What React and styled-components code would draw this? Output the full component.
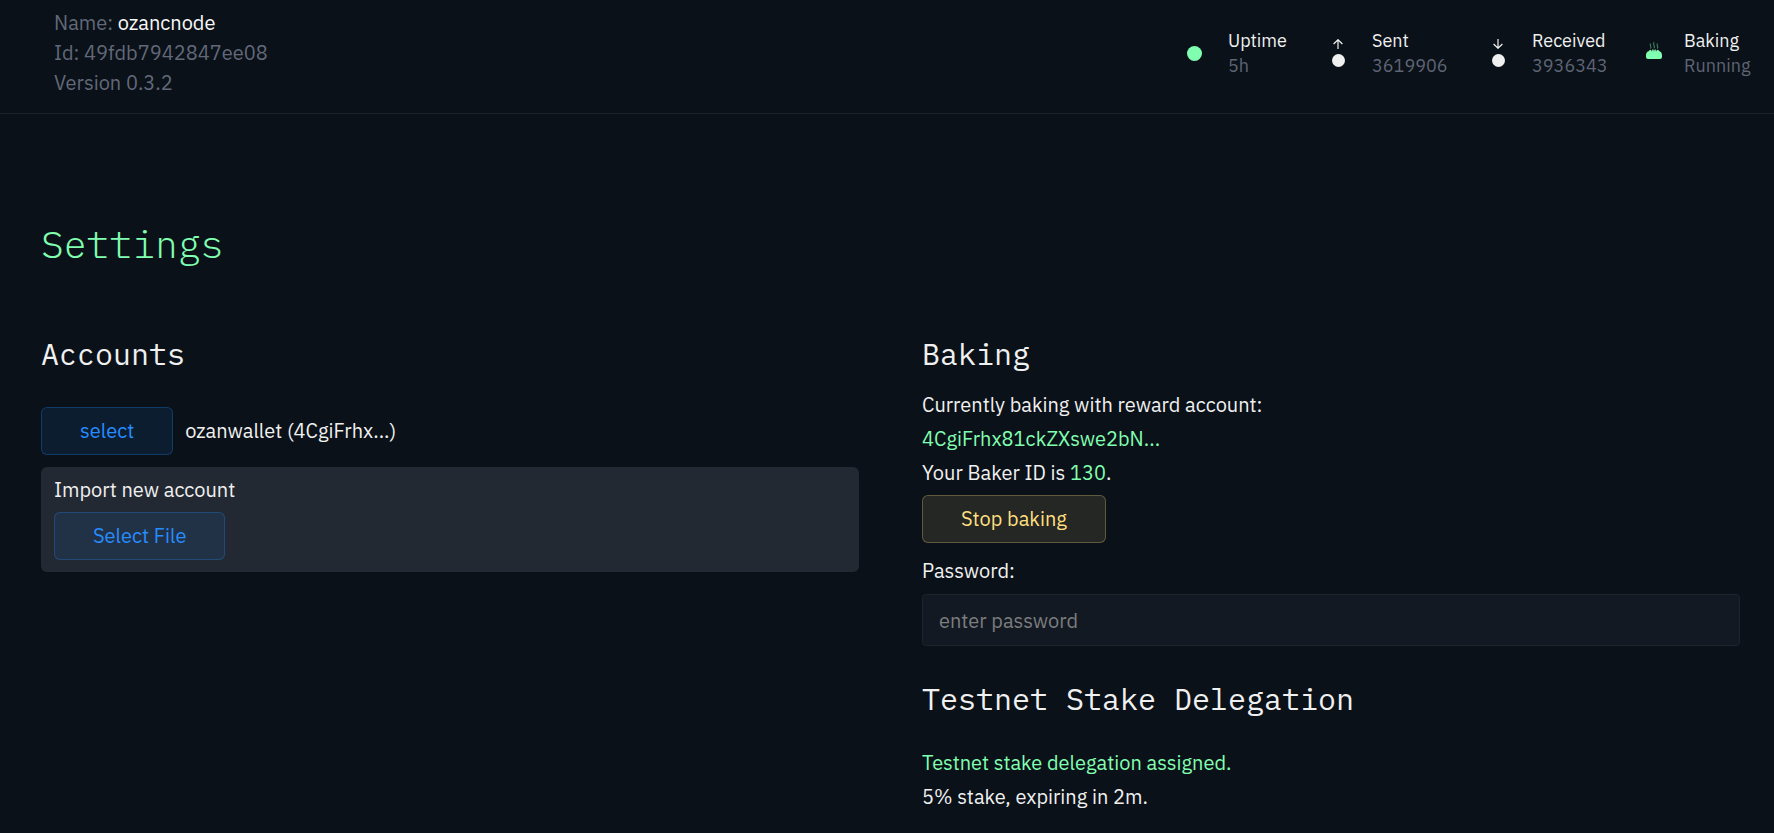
import React from "react";
import styled, { createGlobalStyle } from "styled-components";

const GlobalStyle = createGlobalStyle`
  *, *::before, *::after { box-sizing: border-box; }
  body {
    margin: 0;
    min-height: 100vh;
    background: #0a1118;
    color: #f0f0f0;
    font: 400 20px/34px "IBM Plex Sans", Roboto, "Liberation Sans", sans-serif;
  }
`;

const Header = styled.header`
  display: flex;
  justify-content: space-between;
  align-items: center;
  padding: 8px 25px 15px 54px;
  border-bottom: 1px solid #1e232b;
`;

const NodeInfo = styled.div`
  color: #626878;
  line-height: 30px;
`;

const NodeName = styled.strong`
  color: #f8f8f8;
  font-weight: 400;
`;

const Stats = styled.div`
  display: flex;
  align-items: center;
  gap: 35px;
`;

const Stat = styled.div`
  display: flex;
  align-items: center;
  gap: 16px;
  font-size: 18px;
  line-height: 25px;
`;

const StatIcon = styled.div`
  display: flex;
  flex-direction: column;
  align-items: center;
  gap: 5px;
  width: ${(p) => (p.$narrow ? 28 : 36)}px;
`;

const StatText = styled.div`
  width: ${(p) => p.$width}px;
  white-space: nowrap;
`;

const StatValue = styled.div`
  color: #5e6474;
`;

const Dot = styled.span`
  width: ${(p) => p.$size}px;
  height: ${(p) => p.$size}px;
  border-radius: 50%;
  background: ${(p) => p.$color};
`;

const Main = styled.main`
  padding: 105px 34px 19px 41px;
`;

const Title = styled.h1`
  margin: 0 0 65px;
  color: #80ffb1;
  font: 300 38px/50px "IBM Plex Mono", "Liberation Mono", monospace;
`;

const Columns = styled.div`
  display: grid;
  grid-template-columns: 1fr 1fr;
  gap: 63px;
`;

const Heading = styled.h2`
  margin: 0 0 ${(p) => p.$space}px;
  font: 400 30px/40px "IBM Plex Mono", "Liberation Mono", monospace;
`;

const Text = styled.p`
  margin: 0;
  color: ${(p) => (p.$accent ? "#80ffb1" : "inherit")};
`;

const Accent = styled.span`
  color: #80ffb1;
`;

const tones = {
  blue: ["#268cff", "rgba(31, 136, 255, 0.1)", "rgba(31, 136, 255, 0.28)"],
  yellow: ["#ffdf80", "rgba(255, 223, 128, 0.11)", "rgba(255, 223, 128, 0.28)"],
};

const Button = styled.button`
  display: block;
  height: 48px;
  padding: 0 38px;
  border: 1px solid ${(p) => tones[p.$tone][2]};
  border-radius: 6px;
  background: ${(p) => tones[p.$tone][1]};
  color: ${(p) => tones[p.$tone][0]};
  font: inherit;
  cursor: pointer;
`;

const AccountRow = styled.div`
  display: flex;
  align-items: center;
  gap: 12px;
  margin-bottom: 12px;
`;

const ImportPanel = styled.div`
  display: grid;
  justify-items: start;
  gap: 5px;
  padding: 6px 13px 12px;
  border-radius: 6px;
  background: #232932;
`;

const BakingForm = styled.form`
  display: grid;
  justify-items: start;
  gap: 6px;
  margin: 5px 0 33px;
`;

const PasswordLabel = styled.label`
  margin-top: 5px;
`;

const PasswordInput = styled.input`
  width: 100%;
  height: 52px;
  padding: 0 16px;
  border: 1px solid #1d242c;
  border-radius: 4px;
  background: #121922;
  color: #f0f0f0;
  font: inherit;
  &::placeholder { color: #7c7d7e; opacity: 1; }
`;

function Arrow({ down }) {
  return (
    <svg width="10" height="10" viewBox="0 0 10 10" fill="none" stroke="#f0f0f0" strokeWidth="1.2" aria-hidden="true">
      <path d={down ? "M5 0V9.2M0.6 5L5 9.3L9.4 5" : "M5 10V0.8M0.6 5L5 0.7L9.4 5"} />
    </svg>
  );
}

function Bread() {
  return (
    <svg width="16" height="22" viewBox="0 0 16 22" aria-hidden="true">
      <path
        d="M4.6 1.5q-.8 1.3 0 2.5t0 2.6M8 .2q-.8 1.6 0 3.2t0 2.9M11.4 1.5q-.8 1.3 0 2.5t0 2.6"
        fill="none"
        stroke="#80ffb1"
        strokeOpacity=".6"
        strokeWidth=".9"
      />
      <path
        d="M2.6 9.2L4 7.8L5.3 8.2L6 9.8L6.3 7.4H7.5L8 9.8L8.5 7.4H9.7L10 9.8L10.7 8.2L12 7.8L13.4 9.2C15.2 9.8 16 11.3 16 13.3V15Q16 17 14 17H2Q0 17 0 15V13.3C0 11.3 .8 9.8 2.6 9.2Z"
        fill="#80ffb1"
      />
    </svg>
  );
}

const stats = [
  { label: "Uptime", value: "5h", width: 57, icon: <Dot $size={15} $color="#80ffb1" /> },
  { label: "Sent", value: "3619906", width: 73, icon: <><Arrow /><Dot $size={13} $color="#f0f0f0" /></> },
  { label: "Received", value: "3936343", width: 73, icon: <><Arrow down /><Dot $size={13} $color="#f0f0f0" /></> },
  { label: "Baking", value: "Running", width: 65, narrow: true, icon: <Bread /> },
];

export default function App() {
  return (
    <>
      <GlobalStyle />
      <Header>
        <NodeInfo>
          <div>Name: <NodeName>ozancnode</NodeName></div>
          <div>Id: 49fdb7942847ee08</div>
          <div>Version 0.3.2</div>
        </NodeInfo>
        <Stats>
          {stats.map((s) => (
            <Stat key={s.label}>
              <StatIcon $narrow={s.narrow}>{s.icon}</StatIcon>
              <StatText $width={s.width}>
                <div>{s.label}</div>
                <StatValue>{s.value}</StatValue>
              </StatText>
            </Stat>
          ))}
        </Stats>
      </Header>
      <Main>
        <Title>Settings</Title>
        <Columns>
          <section>
            <Heading $space={33}>Accounts</Heading>
            <AccountRow>
              <Button type="button" $tone="blue">select</Button>
              <span>ozanwallet (4CgiFrhx...)</span>
            </AccountRow>
            <ImportPanel>
              <Text>Import new account</Text>
              <Button type="button" $tone="blue">Select File</Button>
            </ImportPanel>
          </section>
          <section>
            <Heading $space={14}>Baking</Heading>
            <Text>Currently baking with reward account:</Text>
            <Text $accent>4CgiFrhx81ckZXswe2bN...</Text>
            <Text>Your Baker ID is <Accent>130</Accent>.</Text>
            <BakingForm onSubmit={(e) => e.preventDefault()}>
              <Button type="button" $tone="yellow">Stop baking</Button>
              <PasswordLabel htmlFor="password">Password:</PasswordLabel>
              <PasswordInput id="password" type="password" placeholder="enter password" />
            </BakingForm>
            <Heading $space={27}>Testnet Stake Delegation</Heading>
            <Text $accent>Testnet stake delegation assigned.</Text>
            <Text>5% stake, expiring in 2m.</Text>
          </section>
        </Columns>
      </Main>
    </>
  );
}
